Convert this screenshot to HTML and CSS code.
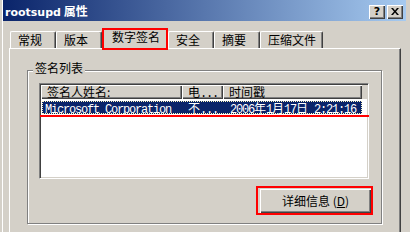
FILE: index.html
```html
<!DOCTYPE html>
<html>
<head>
<meta charset="utf-8">
<link rel="stylesheet" href="styles.css">
</head>
<body>
<div class="window">
  <div class="titlebar">
    <span class="title"><span class="title-latin">rootsupd</span> 属性</span>
    <div class="caption-btns">
      <span class="cbtn cbtn-help">?</span>
      <span class="cbtn"><svg width="8" height="7" viewBox="0 0 8 7"><path d="M0 0h2l2 2.5L6 0h2L5 3.5 8 7H6L4 4.5 2 7H0l3-3.5z" fill="#000"/></svg></span>
    </div>
  </div>
  <div class="client">
    <div class="tabs">
      <div class="tab">常规</div>
      <div class="tab">版本</div>
      <div class="tab tab-sel">数字签名</div>
      <div class="tab">安全</div>
      <div class="tab">摘要</div>
      <div class="tab">压缩文件</div>
    </div>
    <div class="panel">
      <div class="group">
        <span class="legend">签名列表</span>
        <div class="list">
          <div class="header">
            <div class="hcell hc1">签名人姓名:</div>
            <div class="hcell hc2">电<span class="m">...</span></div>
            <div class="hcell hc3">时间戳</div>
          </div>
          <div class="row">
            <div class="cell rc1"><span class="m">Microsoft Corporation</span></div>
            <div class="cell rc2">不<span class="m">...</span></div>
            <div class="cell rc3"><span class="m">2006</span>年<span class="m">1</span>月<span class="m">17</span>日<span class="m">&nbsp;2:21:16</span></div>
          </div>
          <div class="mark"></div>
        </div>
        <div class="actions">
          <div class="redbox"><button class="btn">详细信息 (<u>D</u>)</button></div>
        </div>
      </div>
    </div>
  </div>
</div>
</body>
</html>
```
FILE: styles.css
```css
* { box-sizing: border-box; }
html, body { margin: 0; }
body {
  width: 410px;
  height: 232px;
  overflow: hidden;
  background: #d4d0c8;
  font: 12px/1 "Noto Sans CJK SC", sans-serif;
  color: #000;
}
.window {
  margin-left: 2px;
  border-left: 1px solid #fff;
  height: 232px;
  padding-right: 4px;
}
.titlebar {
  height: 21px;
  background: linear-gradient(to right, #0a246a, #a6caf0);
  display: flex;
  justify-content: space-between;
  padding: 0 3px 0 2px;
  color: #fff;
}
.title {
  font-weight: bold;
  font-size: 12px;
  line-height: 22px;
  white-space: nowrap;
}
.title-latin {
  font-family: "DejaVu Sans", sans-serif;
  font-size: 11px;
}
.caption-btns {
  display: flex;
  gap: 2px;
  margin-top: 5px;
}
.cbtn {
  width: 16px;
  height: 14px;
  background: #d4d0c8;
  box-shadow: inset 1px 1px #fff, inset -1px -1px #404040, inset -2px -2px #808080;
  display: flex;
  align-items: center;
  justify-content: center;
  color: #000;
  font: bold 11px/1 "DejaVu Sans", sans-serif;
  padding-bottom: 1px;
}
.client {
  padding: 0 5px 0 6px;
}
.tabs {
  display: flex;
  align-items: flex-end;
  height: 20px;
  margin-top: 7px;
  padding-left: 1px;
}
.tab {
  height: 17px;
  min-width: 46px;
  padding: 0 6px 0 7px;
  line-height: 15px;
  border: 1px solid #fff;
  border-bottom: 0;
  border-right-color: #404040;
  box-shadow: inset -1px 0 #808080;
  border-radius: 2px 2px 0 0;
  white-space: nowrap;
}
.tab-sel {
  position: relative;
  z-index: 1;
  height: 22px;
  margin-bottom: -2px;
  padding: 0 6px 0 8px;
  border: 2px solid #f00;
  border-radius: 0;
  box-shadow: none;
  line-height: 13px;
  background: #d4d0c8;
}
.panel {
  height: 184px;
  border-top: 1px solid #fff;
  border-left: 1px solid #fff;
  border-right: 1px solid #404040;
  box-shadow: inset -1px 0 #808080;
  padding: 21px 0 0 17px;
}
.group {
  position: relative;
  width: 355px;
  height: 154px;
  border: 1px solid #808080;
  box-shadow: 1px 1px 0 #fff, inset 1px 1px 0 #fff;
  padding: 12px 8px 0 11px;
}
.legend {
  position: absolute;
  left: 5px;
  top: -9px;
  padding: 0 2px;
  background: #d4d0c8;
  line-height: 12px;
}
.list {
  position: relative;
  width: 330px;
  height: 96px;
  background: #fff;
  border: 1px solid;
  border-color: #808080 #fff #fff #808080;
  box-shadow: inset 1px 1px #404040, inset -1px -1px #d4d0c8;
  padding: 1px;
}
.header {
  display: flex;
  height: 14px;
  background: #d4d0c8;
}
.hcell {
  height: 14px;
  line-height: 14px;
  padding-left: 6px;
  box-shadow: inset 1px 1px #fff, inset -1px -1px #404040, inset -2px -2px #808080;
  white-space: nowrap;
}
.hc1 { width: 141px; }
.hc2 { width: 41px; }
.hc3 { width: 139px; }
.row {
  display: flex;
  width: 320px;
  height: 13px;
  margin: 2px 0 0 1px;
  background: #0a246a;
  color: #fff;
  outline: 1px dotted #fff8c0;
  outline-offset: -1px;
  line-height: 13px;
}
.cell {
  white-space: nowrap;
}
.rc1 { width: 140px; padding-left: 3px; }
.rc2 { width: 41px; padding-left: 6px; }
.rc3 { width: 139px; padding-left: 7px; }
.m {
  font-family: "Liberation Mono", monospace;
  font-size: 12px;
  letter-spacing: -1.2px;
}
.mark {
  position: absolute;
  left: 0;
  right: -1px;
  top: 31px;
  height: 2px;
  background: #f00;
}
.actions {
  display: flex;
  justify-content: flex-end;
  margin-top: 7px;
}
.redbox {
  border: 2px solid #f00;
  padding: 1px 0 0 2px;
}
.btn {
  display: block;
  appearance: none;
  width: 111px;
  height: 24px;
  border: 0;
  padding: 0;
  background: #d4d0c8;
  box-shadow: inset 1px 1px #fff, inset -1px -1px #404040, inset -2px -2px #808080;
  font: 12px/1 "Noto Sans CJK SC", sans-serif;
  color: #000;
}
```
